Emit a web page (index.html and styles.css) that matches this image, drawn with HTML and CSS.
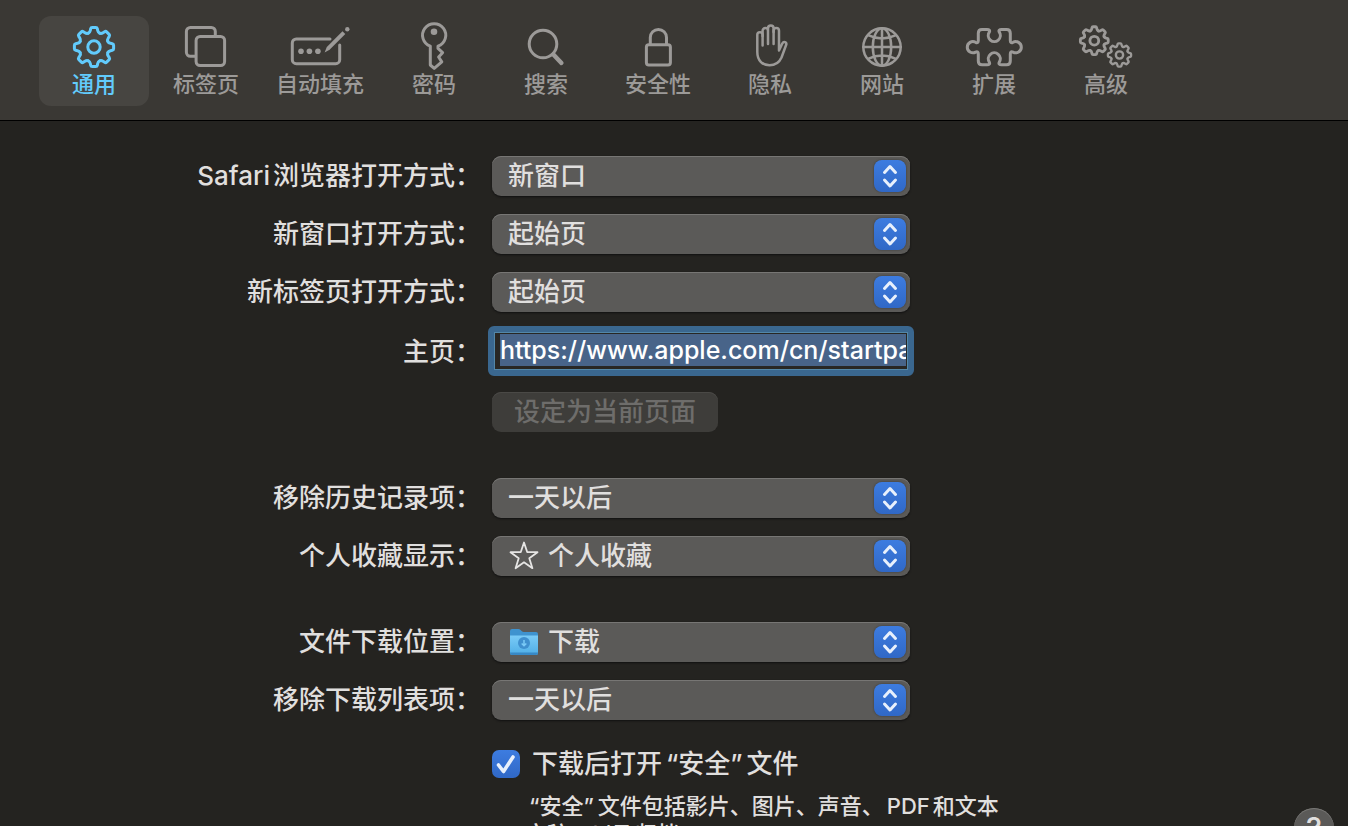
FILE: index.html
```html
<!DOCTYPE html>
<html lang="zh-CN">
<head>
<meta charset="utf-8">
<meta name="viewport" content="width=device-width, initial-scale=1">
<title>通用</title>
<link rel="stylesheet" href="styles.css">
</head>
<body>
<svg class="defs" aria-hidden="true">
  <defs>
    <path id="tooth" d="M-5.7-13.8C-4.3-14.4-4-15-3.7-16.5L-3.3-18.3Q-3-19.6-1.8-19.6H1.8Q3-19.6 3.3-18.3L3.7-16.5C4-15 4.3-14.4 5.7-13.8"/>
    <g id="gear">
      <use href="#tooth"/>
      <use href="#tooth" transform="rotate(45)"/>
      <use href="#tooth" transform="rotate(90)"/>
      <use href="#tooth" transform="rotate(135)"/>
      <use href="#tooth" transform="rotate(180)"/>
      <use href="#tooth" transform="rotate(225)"/>
      <use href="#tooth" transform="rotate(270)"/>
      <use href="#tooth" transform="rotate(315)"/>
      <circle r="6.2"/>
    </g>
    <symbol id="stepper" viewBox="0 0 32 32">
      <path d="M10.500 12.500L16 6.500L21.500 12.500M10.500 20L16 26L21.500 20"/>
    </symbol>
  </defs>
</svg>

<nav class="toolbar">
  <button type="button" class="tab tab-active" aria-current="page">
    <svg class="tab-icon" viewBox="0 0 64 48"><use href="#gear" transform="translate(32 25)"/></svg>
    <span>通用</span>
  </button>
  <button type="button" class="tab">
    <svg class="tab-icon" viewBox="0 0 64 48"><rect x="22.1" y="14.4" width="28.5" height="29.2" rx="4"/><path d="M21 34.3H16.4a4 4 0 0 1-4-4V9.4a4 4 0 0 1 4-4H37.3a4 4 0 0 1 4 4V13"/></svg>
    <span>标签页</span>
  </button>
  <button type="button" class="tab">
    <svg class="tab-icon" viewBox="0 0 64 48"><path d="M42 17H8.3a4 4 0 0 0-4 4V37.7a4 4 0 0 0 4 4H47.7a4 4 0 0 0 4-4V23"/><g class="solid"><circle cx="13" cy="29.3" r="2.8"/><circle cx="21.4" cy="29.3" r="2.8"/><circle cx="29.9" cy="29.3" r="2.8"/><path d="M36.6 30.4L38.8 25L54.5 9.2L57.3 12L41.6 27.8Z"/><circle cx="59.3" cy="7.2" r="2.2"/></g></svg>
    <span>自动填充</span>
  </button>
  <button type="button" class="tab">
    <svg class="tab-icon" viewBox="0 0 64 48"><path d="M28.3 24.2A11.6 11.6 0 1 1 36 24.2V26.4L40.6 30.7L36.6 35L39.8 39.8L32.2 46.4L28.3 43Z"/><circle class="solid" cx="32" cy="9.7" r="3.3"/></svg>
    <span>密码</span>
  </button>
  <button type="button" class="tab">
    <svg class="tab-icon" viewBox="0 0 64 48"><circle cx="29" cy="22" r="13.8"/><path class="heavy" d="M39.4 32.4L47.4 41"/></svg>
    <span>搜索</span>
  </button>
  <button type="button" class="tab">
    <svg class="tab-icon" viewBox="0 0 64 48"><rect x="20.4" y="22.7" width="24" height="20.2" rx="2.4"/><path d="M24.3 22.5V15.5a8.1 8.1 0 0 1 16.2 0V22.5"/></svg>
    <span>安全性</span>
  </button>
  <button type="button" class="tab">
    <svg class="tab-icon thin" viewBox="0 0 64 48"><path d="M24.6 23.5V12.8a2.65 2.65 0 0 0-5.3 0V30C19.3 38.5 24.5 43.3 31.5 43.3C38.5 43.3 41.5 40 43.5 35.5L48.2 22.8C49 20.3 45.8 18.8 44.4 21.3L41 28.5V8.7a2.7 2.7 0 0 0-5.4 0V22"/><path d="M24.6 14V8.7a2.7 2.7 0 0 1 5.4 0V22M30 10V6.4a2.8 2.8 0 0 1 5.6 0V10"/></svg>
    <span>隐私</span>
  </button>
  <button type="button" class="tab">
    <svg class="tab-icon thin" viewBox="0 0 64 48"><circle cx="32" cy="25" r="18.7"/><ellipse cx="32" cy="25" rx="9.2" ry="18.7"/><path d="M32 6.3V43.7M13.3 25H50.7M18 13.2Q32 19.8 46 13.2M18 36.8Q32 30.2 46 36.8"/></svg>
    <span>网站</span>
  </button>
  <button type="button" class="tab">
    <svg class="tab-icon" viewBox="0 0 64 48"><path d="M16.3 18.5V11.3Q16.3 7.5 20 7.5H25Q28.6 7.5 27.3 10.2A6 6 0 1 0 37.3 10.2Q36 7.5 39.6 7.5H44.6Q48.3 7.5 48.3 11.3V18.5Q48.3 21.6 51 20.3A5.6 5.6 0 1 1 51 30.1Q48.3 28.8 48.3 31.9V39Q48.3 42.8 44.6 42.8H39.6Q36 42.8 37.3 40.1A6 6 0 1 0 27.3 40.1Q28.6 42.8 25 42.8H20Q16.3 42.8 16.3 39V31.9Q16.3 28.8 13.6 30.1A5.6 5.6 0 1 1 13.6 20.3Q16.3 21.6 16.3 18.5Z"/></svg>
    <span>扩展</span>
  </button>
  <button type="button" class="tab">
    <svg class="tab-icon gears" viewBox="0 0 64 48"><use href="#gear" transform="translate(20.3 18.7) scale(.71)"/><use href="#gear" transform="translate(45.5 33) scale(.59)"/></svg>
    <span>高级</span>
  </button>
</nav>

<main class="pane">
  <section class="group">
    <div class="row">
      <label for="open-with"><span class="latin">Safari</span>浏览器打开方式：</label>
      <div class="popup"><select id="open-with"><option>新窗口</option></select><svg class="stepper"><use href="#stepper"/></svg></div>
    </div>
    <div class="row">
      <label for="new-window">新窗口打开方式：</label>
      <div class="popup"><select id="new-window"><option>起始页</option></select><svg class="stepper"><use href="#stepper"/></svg></div>
    </div>
    <div class="row">
      <label for="new-tab">新标签页打开方式：</label>
      <div class="popup"><select id="new-tab"><option>起始页</option></select><svg class="stepper"><use href="#stepper"/></svg></div>
    </div>
    <div class="row">
      <label for="homepage">主页：</label>
      <input class="url" id="homepage" type="text" value="https://www.apple.com/cn/startpage/">
    </div>
    <div class="row">
      <button type="button" class="push" disabled>设定为当前页面</button>
    </div>
  </section>

  <section class="group">
    <div class="row">
      <label for="history">移除历史记录项：</label>
      <div class="popup"><select id="history"><option>一天以后</option></select><svg class="stepper"><use href="#stepper"/></svg></div>
    </div>
    <div class="row">
      <label for="favorites">个人收藏显示：</label>
      <div class="popup popup-icon"><select id="favorites"><option>个人收藏</option></select><svg class="item-icon star" viewBox="0 0 30 30"><path d="M15 1.500L18.200 11L28.500 11.200L20.300 17.200L23.400 27.200L15 21.300L6.600 27.200L9.700 17.200L1.500 11.200L11.800 11Z"/></svg><svg class="stepper"><use href="#stepper"/></svg></div>
    </div>
  </section>

  <section class="group">
    <div class="row">
      <label for="download-dir">文件下载位置：</label>
      <div class="popup popup-icon"><select id="download-dir"><option>下载</option></select><svg class="item-icon" viewBox="0 0 30 30"><defs><linearGradient id="front" x2="0" y2="1"><stop stop-color="#7acbf7"/><stop offset="1" stop-color="#4faee6"/></linearGradient></defs><path fill="#3f93cf" d="M1 4a2 2 0 0 1 2-2h6.500q1 0 1.800.7l1.600 1.500q.8.700 1.900.700H27a2 2 0 0 1 2 2V26H1Z"/><path fill="url(#front)" d="M1 8.500H29V26a2 2 0 0 1-2 2H3a2 2 0 0 1-2-2Z"/><path fill="#3889c6" d="M1 25.500H29V26a2 2 0 0 1-2 2H3a2 2 0 0 1-2-2Z"/><circle cx="15" cy="16" r="6" fill="#3f8fce"/><path d="M15 13V18.500M12.700 16.500L15 18.800L17.300 16.500" fill="none" stroke="#7bcaf6" stroke-width="1.500"/></svg><svg class="stepper"><use href="#stepper"/></svg></div>
    </div>
    <div class="row">
      <label for="download-list">移除下载列表项：</label>
      <div class="popup"><select id="download-list"><option>一天以后</option></select><svg class="stepper"><use href="#stepper"/></svg></div>
    </div>
  </section>

  <div class="row">
    <div class="check">
      <input type="checkbox" id="safe-files" checked>
      <svg class="tick" viewBox="0 0 28 28"><path d="M6.500 15L11.500 21.500L21 7"/></svg>
      <label for="safe-files">下载后打开<span class="quoted">“安全”</span>文件</label>
    </div>
  </div>
  <div class="row">
    <div class="note-line">
      <p class="note"><span class="quoted">“安全”</span>文件包括影片、图片、声音、<span class="latin">PDF</span>和文本文稿，以及归档。</p>
      <button type="button" class="help" aria-label="帮助">?</button>
    </div>
  </div>
</main>
</body>
</html>
```

FILE: styles.css
```css
* {
  box-sizing: border-box;
}

html,
body {
  height: 100%;
}

body {
  margin: 0;
  overflow: hidden;
  background: #242320;
  color: #e0dfde;
  font-family: Inter, "Noto Sans CJK SC", sans-serif;
  font-size: 26px;
  font-weight: 500;
  line-height: 36px;
}

button,
input,
select {
  margin: 0;
  font: inherit;
  color: inherit;
}

.defs {
  position: absolute;
  width: 0;
  height: 0;
}

/* Toolbar */
.toolbar {
  display: flex;
  gap: 2px;
  padding: 16px 39px 14px;
  background: #3a3834;
  border-bottom: 1px solid #000;
}

.tab {
  display: flex;
  flex-direction: column;
  align-items: center;
  min-width: 110px;
  padding: 6px 13px 8px;
  border: 0;
  border-radius: 12px;
  background: none;
  color: #9c9a98;
  font-size: 22px;
  line-height: 28px;
  white-space: nowrap;
}

.tab-active {
  background: #474541;
  color: #62cbfc;
}

.tab-icon {
  width: 64px;
  height: 48px;
  overflow: visible;
  fill: none;
  stroke: currentColor;
  stroke-width: 3;
  stroke-linecap: round;
  stroke-linejoin: round;
}

.thin {
  stroke-width: 2.5;
}

.gears {
  stroke-width: 4;
}

.solid {
  fill: currentColor;
  stroke: none;
}

.heavy {
  stroke-width: 4.4;
}

/* Settings form */
.pane {
  padding: 35px 14px 0 0;
}

.group {
  display: grid;
  gap: 18px;
  margin-bottom: 46px;
}

.group:last-of-type {
  margin-bottom: 26px;
}

.row {
  display: grid;
  grid-template-columns: 481px 1fr;
  column-gap: 11px;
  align-items: center;
}

.row > label {
  text-align: right;
}

.row > :only-child {
  grid-column: 2;
}

.latin {
  margin-right: 3px;
}

.note .latin {
  margin-left: 3px;
}

.quoted {
  margin: 0 4px;
}

.popup {
  display: grid;
  align-items: center;
  width: 100%;
  max-width: 418px;
}

.popup > * {
  grid-area: 1 / 1;
}

.popup select {
  appearance: none;
  width: 100%;
  height: 40px;
  padding: 0 44px 0 16px;
  border: 0;
  border-radius: 9px;
  background: #5b5a58;
  box-shadow: inset 0 1px #777674, 0 1px 2px #111;
  line-height: 36px;
}

.popup-icon select {
  padding-left: 56px;
}

.item-icon {
  width: 30px;
  height: 30px;
  margin-left: 17px;
  pointer-events: none;
}

.star {
  fill: none;
  stroke: #e6e5e4;
  stroke-width: 1.8;
  stroke-linejoin: round;
}

.stepper {
  justify-self: end;
  width: 32px;
  height: 32px;
  margin-right: 4px;
  border-radius: 8px;
  background: linear-gradient(#3d7ce0, #3068c6);
  box-shadow: 0 0 2px #333;
  fill: none;
  stroke: #e8f0fc;
  stroke-width: 3;
  stroke-linecap: round;
  stroke-linejoin: round;
  pointer-events: none;
}

.url {
  width: calc(100% + 8px);
  max-width: 426px;
  height: 50px;
  margin: -4px 0 -2px -4px;
  padding: 2px 2px 4px 6px;
  border: 6px solid #3a678f;
  border-radius: 6px;
  background: linear-gradient(#486489, #486489) content-box, #282724;
  box-shadow: inset 0 0 0 1px #5387a8;
  color: #fff;
  font-size: 25px;
  outline: 0;
}

.push {
  justify-self: start;
  height: 40px;
  padding: 0 22px;
  border: 0;
  border-radius: 9px;
  background: #3e3d3a;
  box-shadow: inset 0 1px #4a4946;
  color: #6e6d6b;
}

.check {
  display: grid;
  grid-template-columns: 28px 1fr;
  column-gap: 12px;
  align-items: center;
}

.check input {
  grid-area: 1 / 1;
  appearance: none;
  width: 28px;
  height: 28px;
  border-radius: 7px;
  background: linear-gradient(#3d7ce0, #3068c6);
}

.tick {
  grid-area: 1 / 1;
  width: 28px;
  height: 28px;
  fill: none;
  stroke: #e8f0fc;
  stroke-width: 3.6;
  stroke-linecap: round;
  stroke-linejoin: round;
  pointer-events: none;
}

.note-line {
  display: flex;
  align-items: flex-start;
  justify-content: space-between;
  padding-top: 10px;
}

.note {
  flex: none;
  width: 514px;
  margin: 0;
  padding-left: 33px;
  font-size: 22px;
  line-height: 28px;
}

.help {
  width: 40px;
  height: 40px;
  margin-top: 16px;
  padding: 0;
  border: 0;
  border-radius: 50%;
  background: #5b5a58;
  box-shadow: inset 0 1px #777674;
  font-size: 30px;
  line-height: 36px;
}
```
